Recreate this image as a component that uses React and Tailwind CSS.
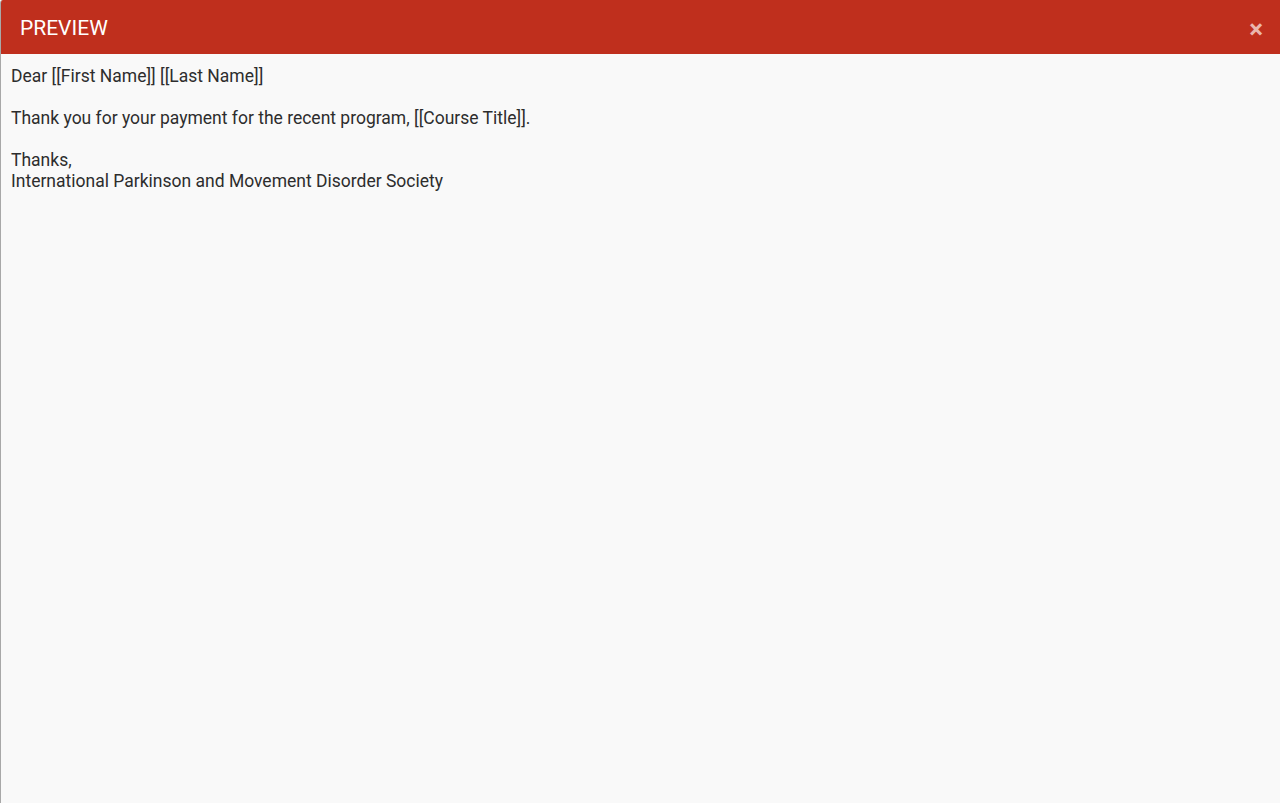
export default function App() {
  return (
    <div className="h-[803px] w-[1280px] flex flex-col bg-[#f9f9f9] border-l border-[#a8a8a8] rounded-tl-[3px] overflow-hidden" style={{ fontFamily: "Roboto, 'Liberation Sans', sans-serif" }}>
      <div className="h-[54px] shrink-0 bg-[#bf2f1d] flex items-center justify-between pl-[19px] pr-[17px]">
        <span className="text-white text-[21px] leading-none mt-[2px]">PREVIEW</span>
        <span className="text-[#eab6ae] text-[26px] font-bold leading-none mt-[4px]">×</span>
      </div>
      <div className="px-[10px] pt-[12px] text-[17.5px] leading-[21px] text-[#2d2d2d]">
        <p>Dear [[First Name]] [[Last Name]]</p>
        <p className="mt-[21px]">Thank you for your payment for the recent program, [[Course Title]].</p>
        <p className="mt-[21px]">Thanks,<br />International Parkinson and Movement Disorder Society</p>
      </div>
    </div>
  );
}
